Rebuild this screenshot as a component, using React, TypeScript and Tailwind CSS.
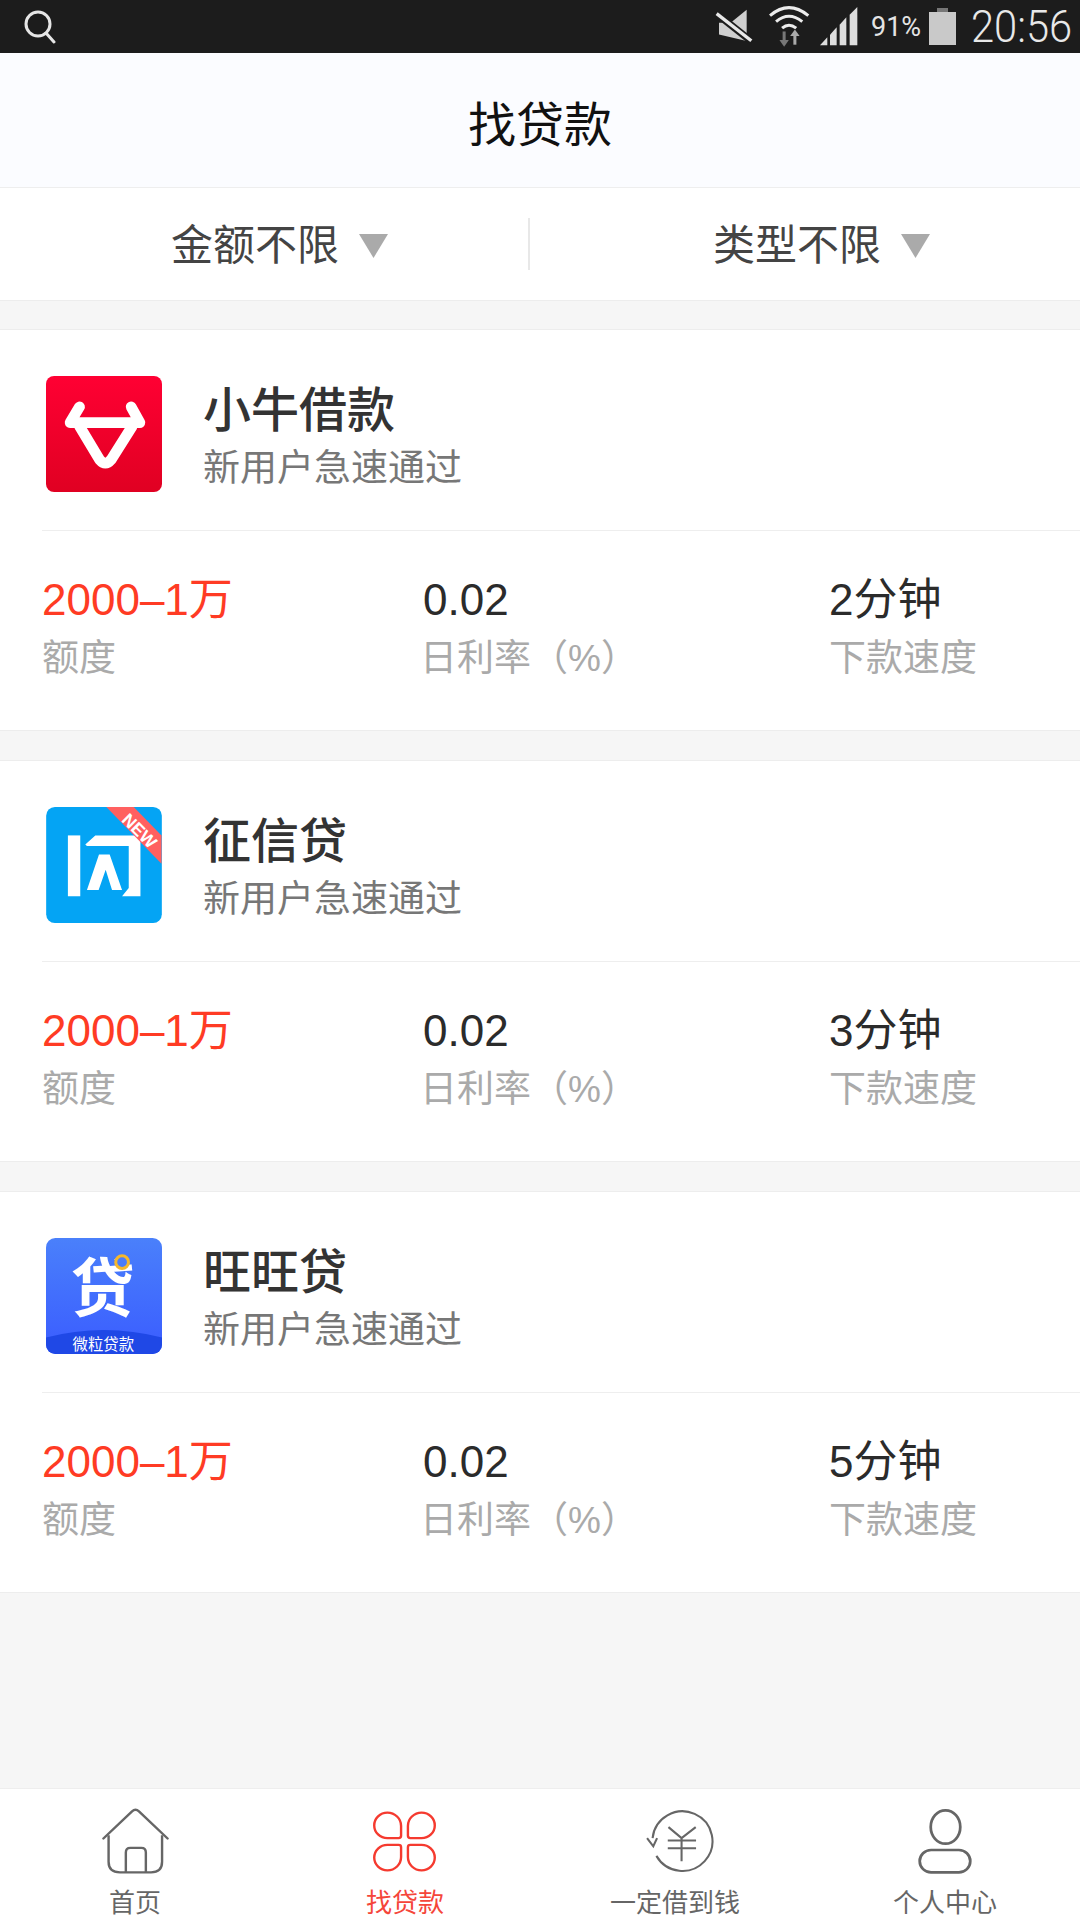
const cjk = "font-['Liberation_Sans','Noto_Sans_CJK_SC',sans-serif]";

function BullIcon() {
  return (
    <svg viewBox="48 35 346 346" className="w-[116px] h-[116px] shrink-0">
      <defs>
        <linearGradient id="bull" x1="0" y1="0" x2="0" y2="1">
          <stop offset="0" stopColor="#ff0033" />
          <stop offset="1" stopColor="#e00022" />
        </linearGradient>
      </defs>
      <rect x="48" y="35" width="346" height="346" rx="24" fill="url(#bull)" />
      <g fill="none" stroke="#fff" strokeLinecap="round" strokeLinejoin="round" strokeWidth="32">
        <path d="M148 127 L120 174 H328 L302 127" />
        <path d="M148 185 L208 285 Q225 305 242 285 L305 185" />
      </g>
    </svg>
  );
}

function FlashIcon() {
  return (
    <svg viewBox="78 80 346 347" className="w-[116px] h-[116px] shrink-0">
      <rect x="78" y="80" width="346" height="347" rx="26" fill="#04a4f4" />
      <g fill="#fff">
        <rect x="143" y="165" width="37" height="182" />
        <polygon points="195,192 225,165 360,165 360,347 305,347 325,322 325,197 200,197" />
        <polygon points="236,222 268,222 305,328 275,328 256,268 235,328 200,328" />
      </g>
      <polygon points="258,80 340,80 423,165 423,250" fill="#ff6060" />
      <text x="357" y="151" transform="rotate(45 357 151)" textAnchor="middle" dominantBaseline="central" fill="#fff" fontSize="52" fontWeight="700" fontFamily="Liberation Sans, sans-serif">NEW</text>
    </svg>
  );
}

function DaiIcon() {
  return (
    <svg viewBox="78 53 346 346" className="w-[116px] h-[116px] shrink-0">
      <defs>
        <linearGradient id="dai" x1="0" y1="0" x2="0" y2="1">
          <stop offset="0" stopColor="#4a80fb" />
          <stop offset="1" stopColor="#3a5cff" />
        </linearGradient>
        <clipPath id="daiClip">
          <rect x="78" y="53" width="346" height="346" rx="28" />
        </clipPath>
      </defs>
      <g clipPath="url(#daiClip)">
        <rect x="78" y="53" width="346" height="346" fill="url(#dai)" />
        <path d="M78 350 Q250 305 424 350 V399 H78 Z" fill="#1f48e6" />
      </g>
      <text x="247" y="272" textAnchor="middle" fill="#fff" fontSize="190" fontWeight="700" fontFamily="Noto Sans CJK SC, sans-serif">贷</text>
      <circle cx="305" cy="125" r="19" fill="#4a7cfb" stroke="#f5b82e" strokeWidth="9" />
      <text x="249" y="388" textAnchor="middle" fill="#fff" fontSize="46" fontFamily="Noto Sans CJK SC, sans-serif">微粒贷款</text>
    </svg>
  );
}

function Card({ name, time, icon }: { name: string; time: string; icon: React.ReactNode }) {
  return (
    <section className="bg-white border-y border-[#ededed] h-[402px] mb-[29px]">
      <div className="h-[200px] pl-[46px] pt-[46px] flex items-start gap-[41px]">
        {icon}
        <div className="flex flex-col">
          <div className="text-[48px] leading-[60px] font-medium text-[#333] mt-[5px]">{name}</div>
          <div className="text-[37px] leading-[50px] text-[#777] mt-[3px]">新用户急速通过</div>
        </div>
      </div>
      <div className="ml-[42px] h-px bg-[#eeeeee]" />
      <div className="pl-[42px] pt-[44px] flex">
        <div className="w-[381px]">
          <div className="text-[44px] leading-[50px] text-[#ff3b24]">2000–1万</div>
          <div className="text-[37px] leading-[50px] mt-[9px] text-[#aaaaaa]">额度</div>
        </div>
        <div className="w-[406px]">
          <div className="text-[44px] leading-[50px] text-[#2b2b2b]">0.02</div>
          <div className="text-[37px] leading-[50px] mt-[9px] -ml-[3px] text-[#aaaaaa]">日利率（%）</div>
        </div>
        <div>
          <div className="text-[44px] leading-[50px] text-[#2b2b2b]">{time}</div>
          <div className="text-[37px] leading-[50px] mt-[9px] text-[#aaaaaa]">下款速度</div>
        </div>
      </div>
    </section>
  );
}

function Filter({ label, className }: { label: string; className: string }) {
  return (
    <div className={`flex items-center gap-[20px] pt-[3px] ${className}`}>
      <span className="text-[42px] text-[#444] leading-[50px]">{label}</span>
      <svg viewBox="0 0 29 24" className="w-[29px] h-[24px]">
        <polygon points="0,0 29,0 14.5,24" fill="#aaaaaa" />
      </svg>
    </div>
  );
}

function NavItem({ label, active, children }: { label: string; active?: boolean; children: React.ReactNode }) {
  return (
    <div className="flex-1 flex flex-col items-center">
      <div className="h-[68px] mt-[18px] flex items-center justify-center">{children}</div>
      <div className={`text-[26px] leading-[30px] mt-[13px] ${active ? "text-[#f5463a]" : "text-[#666]"}`}>{label}</div>
    </div>
  );
}

function StatusBar() {
  return (
    <div className="h-[53px] bg-[#1c1c1c] flex items-center justify-between pl-[24px] pr-[10px] shrink-0 font-['Roboto',sans-serif]">
      <svg viewBox="0 0 32 34" className="w-[32px] h-[34px]" fill="none" stroke="#e6e6e6" strokeWidth="3">
        <circle cx="14" cy="14" r="12" />
        <path d="M22 23 L30 32" strokeLinecap="round" />
      </svg>
      <div className="flex items-center">
        <svg viewBox="110 25 120 115" preserveAspectRatio="none" className="w-[40px] h-[38px]">
          <polygon points="125,70 160,70 208,30 208,125 125,105" fill="#cfcfcf" />
          <path d="M115 40 L225 128" stroke="#1c1c1c" strokeWidth="22" />
          <path d="M118 42 L222 124" stroke="#e8e8e8" strokeWidth="10" />
        </svg>
        <svg viewBox="270 20 125 130" preserveAspectRatio="none" className="w-[42px] h-[43px] ml-[14px]" fill="none">
          <g stroke="#ececec" strokeWidth="9">
            <path d="M276 52 Q332 4 390 52" />
            <path d="M294 70 Q332 38 372 70" />
            <path d="M312 90 Q332 72 354 90" />
          </g>
          <path d="M318 100 V132" stroke="#777" strokeWidth="9" />
          <polygon points="304,126 332,126 318,146" fill="#777" />
          <path d="M350 112 V140" stroke="#aaa" strokeWidth="9" />
          <polygon points="336,114 364,114 350,94" fill="#aaa" />
        </svg>
        <svg viewBox="420 25 120 120" className="w-[40px] h-[40px] ml-[9px]" fill="#dddddd">
          <polygon points="423,140 445,116 445,140" />
          <polygon points="453,108 473,86 473,140 453,140" />
          <polygon points="482,78 502,56 502,140 482,140" />
          <polygon points="512,48 535,25 535,140 512,140" />
        </svg>
        <span className="text-[27px] leading-[30px] text-[#e4e4e4] ml-[12px] w-[52px] whitespace-nowrap">91%</span>
        <svg viewBox="0 0 27 38" className="w-[27px] h-[38px] ml-[6px]">
          <rect x="8" y="0" width="11" height="5" fill="#777" />
          <rect x="0" y="4" width="27" height="33" fill="#c9c9c9" />
        </svg>
        <span className="text-[44px] leading-[50px] font-light text-[#e8e8e8] ml-[15px] w-[99px] whitespace-nowrap origin-left scale-x-[0.947]">20:56</span>
      </div>
    </div>
  );
}

export default function App() {
  return (
    <div className={`w-[1080px] h-[1920px] bg-[#f6f6f6] flex flex-col overflow-hidden ${cjk}`}>
      <StatusBar />
      <header className="h-[135px] bg-[#fbfcff] border-b border-[#eeeeee] flex items-center justify-center pt-[12px] shrink-0">
        <h1 className="text-[48px] leading-[60px] text-[#111] font-normal">找贷款</h1>
      </header>
      <div className="h-[113px] bg-white border-b border-[#ededed] flex items-center shrink-0">
        <Filter label="金额不限" className="w-[528px] pl-[171px]" />
        <div className="w-[2px] h-[52px] bg-[#e8e8e8]" />
        <Filter label="类型不限" className="flex-1 pl-[183px]" />
      </div>
      <main className="pt-[28px] flex-1">
        <Card name="小牛借款" time="2分钟" icon={<BullIcon />} />
        <Card name="征信贷" time="3分钟" icon={<FlashIcon />} />
        <Card name="旺旺贷" time="5分钟" icon={<DaiIcon />} />
      </main>
      <nav className="h-[132px] bg-white border-t border-[#eeeeee] flex shrink-0">
        <NavItem label="首页">
          <svg viewBox="295 75 200 205" preserveAspectRatio="none" className="w-[69px] h-[68px]" fill="none" stroke="#666" strokeWidth="7">
            <path d="M302 170 L385 88 Q395 78 405 88 L488 170" strokeLinecap="round" />
            <path d="M317 160 V240 Q317 272 350 272 H440 Q472 272 472 240 V160" />
            <path d="M367 272 V212 Q367 198 380 198 H412 Q425 198 425 212 V272" />
          </svg>
        </NavItem>
        <NavItem label="找贷款" active>
          <svg viewBox="1080 84 190 190" preserveAspectRatio="none" className="w-[65px] h-[63px] -ml-[2px]" fill="none" stroke="#f53a2f" strokeWidth="7">
            <path d="M1125 92 A38 38 0 0 0 1125 169 H1158 Q1165 169 1165 162 V132 A40 40 0 0 0 1125 92 Z" />
            <path d="M1225 92 A38 38 0 0 1 1225 169 H1192 Q1185 169 1185 162 V132 A40 40 0 0 1 1225 92 Z" />
            <path d="M1125 266 A38 38 0 0 1 1125 189 H1158 Q1165 189 1165 196 V226 A40 40 0 0 1 1125 266 Z" />
            <path d="M1225 266 A38 38 0 0 0 1225 189 H1192 Q1185 189 1185 196 V226 A40 40 0 0 0 1225 266 Z" />
          </svg>
        </NavItem>
        <NavItem label="一定借到钱">
          <svg viewBox="310 85 200 190" preserveAspectRatio="none" className="w-[69px] h-[65px] ml-[8px]" fill="none" stroke="#666" strokeWidth="6">
            <path d="M343 222 A87 87 0 1 0 332 170" />
            <path d="M316 170 L334 194 L345 170" />
            <path d="M378 138 L416 170 L457 138 M376 177 H458 M376 200 H458 M416 170 V238" />
          </svg>
        </NavItem>
        <NavItem label="个人中心">
          <svg viewBox="1095 80 160 198" preserveAspectRatio="none" className="w-[55px] h-[66px]" fill="none" stroke="#666" strokeWidth="8">
            <ellipse cx="1175" cy="137" rx="43" ry="50" />
            <rect x="1100" y="206" width="147" height="67" rx="33" />
          </svg>
        </NavItem>
      </nav>
    </div>
  );
}
